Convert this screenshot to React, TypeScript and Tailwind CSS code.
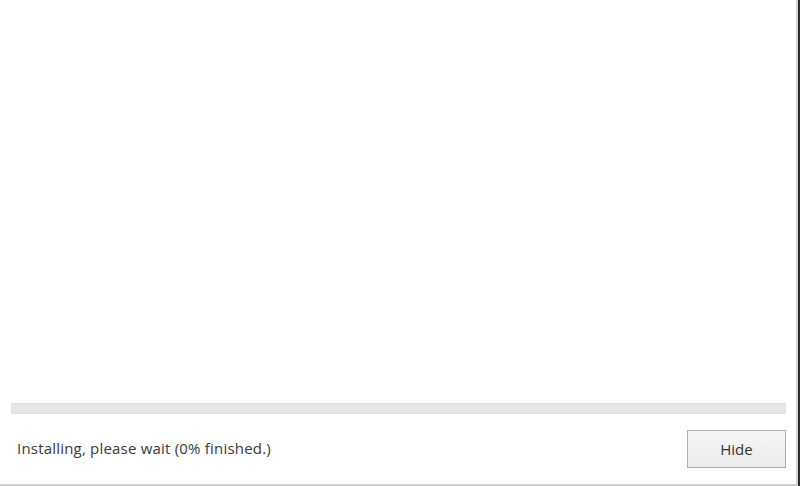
import React from 'react';

const App: React.FC = () => {
  return (
    <div className="w-[800px] h-[486px] flex bg-white overflow-hidden" style={{ fontFamily: '"Open Sans", "Noto Sans", sans-serif' }}>
      <div className="flex-1 flex flex-col border-b-2 border-[#cfcfcf]">
        {/* Empty log area */}
        <div className="flex-1 bg-white"></div>

        {/* Progress bar */}
        <div className="ml-[11px] mr-[10px] h-[11px] bg-[#e6e6e6] border border-[#e0e0e0]"></div>

        {/* Status row */}
        <div className="flex items-center justify-between pl-[17px] pr-[10px] pt-[16px] pb-[16px]">
          <span className="text-[15px] text-[#3a3a3a] tracking-[0.2px] -mt-[2px]">Installing, please wait (0% finished.)</span>
          <button className="w-[99px] h-[38px] border border-[#adadad] bg-gradient-to-b from-[#f6f6f6] to-[#ebebeb] text-[15px] text-[#333]">
            Hide
          </button>
        </div>
      </div>
      <div className="w-[2px] h-full bg-[#d6d6d6]"></div>
      <div className="w-[2px] h-full bg-[#2d2d2d]"></div>
    </div>
  );
};

export default App;
